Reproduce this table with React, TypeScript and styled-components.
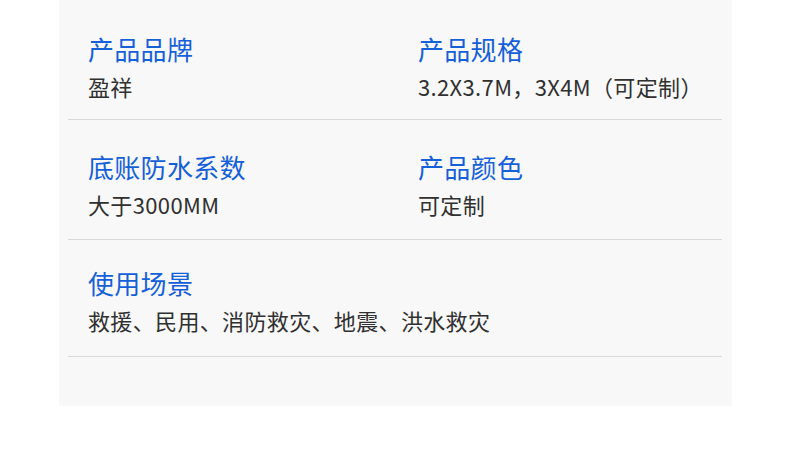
import { ReactElement } from "react";
import styled, { createGlobalStyle } from "styled-components";

interface ISpec {
  label: string;
  value: string;
}

const ROWS: ISpec[][] = [
  [
    { label: "产品品牌", value: "盈祥" },
    { label: "产品规格", value: "3.2X3.7M，3X4M（可定制）" },
  ],
  [
    { label: "底账防水系数", value: "大于3000MM" },
    { label: "产品颜色", value: "可定制" },
  ],
  [{ label: "使用场景", value: "救援、民用、消防救灾、地震、洪水救灾" }],
];

type RowKind = "first" | "middle" | "last";

const rowKind = (index: number): RowKind =>
  index === 0 ? "first" : index === ROWS.length - 1 ? "last" : "middle";

export default function App(): ReactElement {
  return (
    <>
      <GlobalStyle />
      <Panel>
        {ROWS.map((row, index) => (
          <SpecRow key={index} kind={rowKind(index)}>
            {row.map((spec) => (
              <SpecCell key={spec.label}>
                <Label>{spec.label}</Label>
                <Value>{spec.value}</Value>
              </SpecCell>
            ))}
          </SpecRow>
        ))}
      </Panel>
    </>
  );
}

const GlobalStyle = createGlobalStyle`
  html, body {
    margin: 0;
    padding: 0;
    background: #ffffff;
  }
  body {
    font-family: "Noto Sans CJK SC", "Noto Sans", sans-serif;
  }
`;

const Panel = styled.div`
  width: 673px;
  margin-left: 59px;
  padding: 0 10px 49px 9px;
  box-sizing: border-box;
  background: #f8f8f8;
`;

const ROW_TOP: Record<RowKind, string> = { first: "31px", middle: "29px", last: "25px" };
const ROW_HEIGHT: Record<RowKind, string> = { first: "120px", middle: "120px", last: "117px" };

const SpecRow = styled.div<{ kind: RowKind }>`
  display: grid;
  grid-template-columns: 330px 1fr;
  height: ${(p) => ROW_HEIGHT[p.kind]};
  padding: ${(p) => ROW_TOP[p.kind]} 0 0 20px;
  box-sizing: border-box;
  border-bottom: 1px solid #d9d9d9;
`;

const SpecCell = styled.div`
  display: flex;
  flex-direction: column;
`;

const Label = styled.div`
  font-size: 26px;
  line-height: 36px;
  letter-spacing: 0.3px;
  color: #1560d8;
  white-space: nowrap;
`;

const Value = styled.div`
  margin-top: 4px;
  font-size: 22px;
  line-height: 30px;
  letter-spacing: 0.35px;
  color: #303030;
  white-space: nowrap;
`;
